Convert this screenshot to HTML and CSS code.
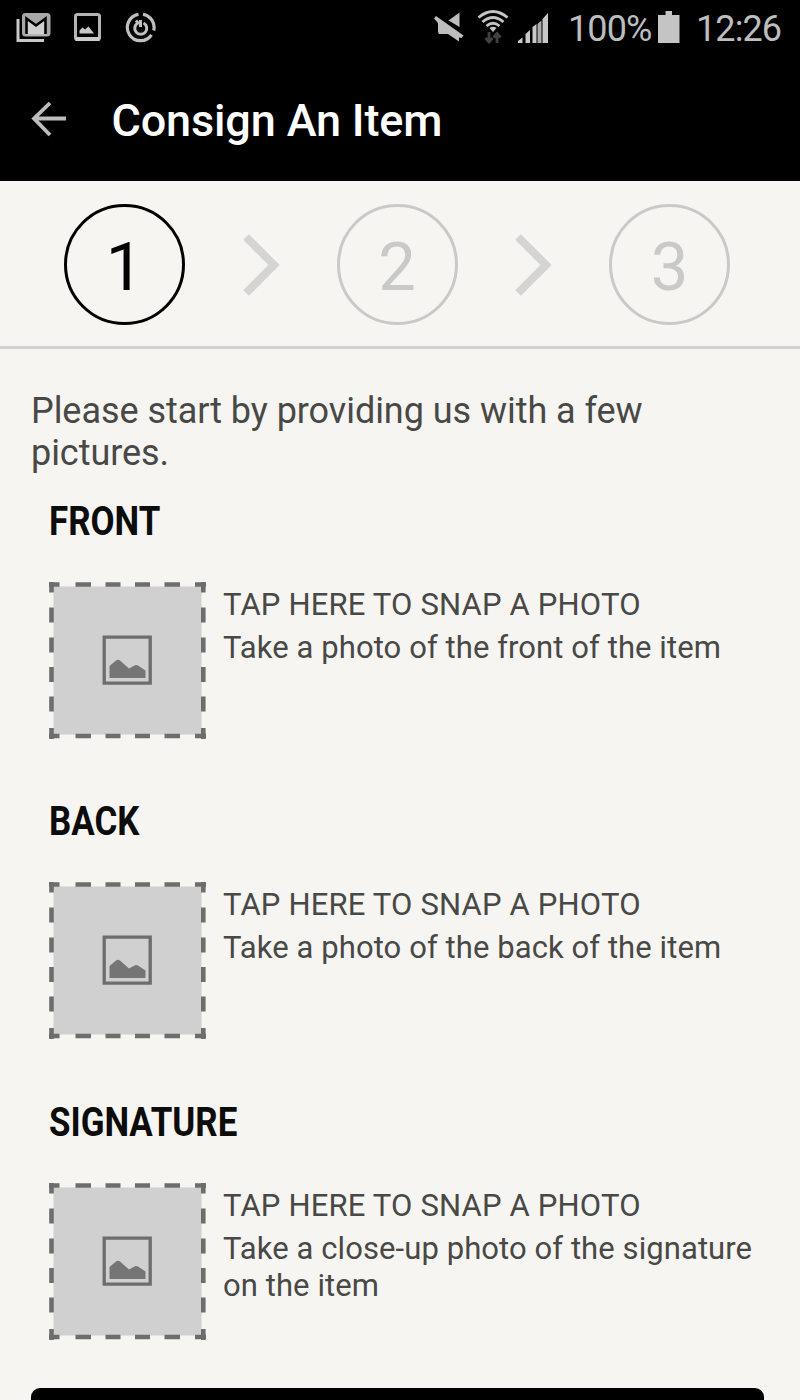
FILE: index.html
```html
<!DOCTYPE html>
<html lang="en">
<head>
<meta charset="utf-8">
<title>Consign An Item</title>
<link rel="stylesheet" href="styles.css">
</head>
<body>
<svg class="defs" width="0" height="0" aria-hidden="true">
  <symbol id="photo" viewBox="0 0 157 157">
    <path fill="#d0d0d0" d="M4.5 4.5h148v148H4.5z"/>
    <g fill="none" stroke="#6d6d6d" stroke-width="4.6">
      <path d="M0 2.5h10.5M26.5 2.5h15.5M56.5 2.5h15M86 2.5h15M115.500 2.500h15.500M146 2.500h11M0 154h10.500M26.500 154h15.500M56.500 154h15M86 154h15M115.500 154h15.500M146 154h11"/>
      <path d="M2.500 0v10.500M2.500 25.500v15M2.500 55.500v15M2.500 85v15M2.500 114.500v15M2.500 146v11M154.300 0v10.500M154.300 25.500v15M154.300 55.500v15M154.300 85v15M154.300 114.500v15M154.300 146v11"/>
      <path stroke-width="3.300" d="M55.200 55.200h46v46h-46z"/>
    </g>
    <path fill="#757575" d="M60.500 96V84L67 78.500Q69 77 71 78.500L80 86.500 85.500 83.500Q87 82.500 89 83.500L96.500 88.500V96z"/>
  </symbol>
</svg>
<header class="header">
  <div class="status">
    <div class="notices">
      <svg width="36" height="32" viewBox="0 0 36 32"><path d="M2 7V28.500H28" fill="none" stroke="#c8c8c8" stroke-width="3"/><rect x="6" y="1" width="28.500" height="23.500" rx="3.500" fill="#a8a8a8"/><path d="M10.500 22V6.500L20 13.500l9.500-7V22" fill="#d0d0d0" stroke="#000" stroke-width="2.600"/><path d="M9 22h22v2H9z" fill="#b4b4b4"/></svg>
      <svg width="28" height="30" viewBox="0 0 28 30"><rect x="1.500" y="2.500" width="24" height="25" rx="2" fill="none" stroke="#b4b4b4" stroke-width="3"/><path d="M1.500 25h24v4h-24z" fill="#ccc"/><path d="M5.500 21.500v-3l3-3 2.500 2 3.500-3 5.500 7z" fill="#c8c8c8"/></svg>
      <svg width="32" height="32" viewBox="0 0 32 32" fill="none" stroke="#c0c0c0" stroke-width="3.200"><path d="M18 2.300A13.200 13.200 0 0 1 28.700 18.500M26.500 22.800A13.200 13.200 0 1 1 13.500 2.400"/><path d="M11 8.500l2 2.500A6 6 0 1 0 18.500 11M15.500 8v7" stroke-width="3"/></svg>
    </div>
    <svg class="mute" width="30" height="30" viewBox="0 0 30 30"><path d="M2 4L29.500 23.500L27.500 26 25 25.500V29.500L14 22H5L4 20V11L0 6.500z" fill="#bebebe"/><path d="M14.500 8.500L25.500 0.500V15z" fill="#bebebe"/></svg>
    <svg class="wifi" width="32" height="34" viewBox="0 0 32 34" fill="none" stroke="#c4c4c4" stroke-width="2.800"><path d="M1.500 7.500Q16-4.500 30.500 7.500M5.500 12Q16 3 26.500 12M9.500 16Q16 10.500 22.500 16"/><path d="M12.500 18Q16 15.500 19.500 18L16 22z" fill="#c4c4c4" stroke="none"/><path d="M12 22v9M8.500 28l3.500 4 3.500-4M20 33V24M16.500 27.500l3.500-4 3.500 4" stroke="#404040" stroke-width="2.800"/></svg>
    <svg class="signal" width="32" height="32" viewBox="0 0 32 32" fill="#c8c8c8"><path d="M1 31v-2l4.500-3.500V31zM8.500 31V22l4.500-4v13z"/><path d="M15.500 31V15l4-3v19z"/><path fill="#aaa" d="M20.500 31V12l4-3.500V31z"/><path d="M25.500 31V7L31 1v30z"/></svg>
    <span class="status-text percent">100%</span>
    <svg class="battery" width="22" height="32" viewBox="0 0 22 32"><path d="M7.500 0h6.500v4H21.500v28H0V4h7.500z" fill="#c4c4c4"/></svg>
    <span class="status-text">12:26</span>
  </div>
  <div class="titlebar">
    <svg width="36" height="36" viewBox="0 0 36 36" fill="none" stroke="#bdbdbd" stroke-width="3.800"><path d="M35 17.500H4M19 2L3 17.500 19 34"/></svg>
    <h1 class="title">Consign An Item</h1>
  </div>
</header>
<nav class="steps">
  <div class="step current">1</div>
  <svg width="38" height="64" viewBox="0 0 38 64"><path d="M4 4l28 28L4 60" fill="none" stroke="#d4d4d2" stroke-width="8"/></svg>
  <div class="step">2</div>
  <svg width="38" height="64" viewBox="0 0 38 64"><path d="M4 4l28 28L4 60" fill="none" stroke="#d4d4d2" stroke-width="8"/></svg>
  <div class="step">3</div>
</nav>
<main class="content">
  <p class="intro">Please start by providing us with a few pictures.</p>
  <section class="item">
    <h2 class="heading">FRONT</h2>
    <div class="row"><svg class="photo"><use href="#photo"/></svg>
      <div class="text"><p class="tap">TAP HERE TO SNAP A PHOTO</p><p class="hint">Take a photo of the front of the item</p></div></div>
  </section>
  <section class="item">
    <h2 class="heading">BACK</h2>
    <div class="row"><svg class="photo"><use href="#photo"/></svg>
      <div class="text"><p class="tap">TAP HERE TO SNAP A PHOTO</p><p class="hint">Take a photo of the back of the item</p></div></div>
  </section>
  <section class="item">
    <h2 class="heading">SIGNATURE</h2>
    <div class="row"><svg class="photo"><use href="#photo"/></svg>
      <div class="text"><p class="tap">TAP HERE TO SNAP A PHOTO</p><p class="hint">Take a close-up photo of the signature<br>on the item</p></div></div>
  </section>
  <div class="button"></div>
</main>
</body>
</html>
```
FILE: styles.css
```css
* { box-sizing: border-box; }
body { margin: 0; height: 1400px; overflow: hidden; background: #f6f5f1; font-family: Roboto, sans-serif; color: #484846; }
h1, h2, p { margin: 0; }
svg { display: block; flex: none; }
.defs { position: absolute; }
.header { height: 181px; background: #000; }
.status { display: flex; height: 60px; padding: 12px 0 0 16px; align-items: flex-start; }
.notices { display: flex; gap: 22px; width: 418px; }
.notices svg:nth-child(3) { margin-left: 1px; }
.wifi { margin: -2px 0 0 13px; }
.signal { margin-left: 8px; }
.battery { margin-top: -1px; }
.status-text { font-size: 36px; line-height: 35px; letter-spacing: -0.9px; color: #bdbdbd; white-space: nowrap; }
.percent { width: 90px; margin-left: 19px; }
.battery + .status-text { margin-left: 16px; }
.titlebar { display: flex; padding: 41px 0 0 31px; }
.title { margin-left: 44.5px; margin-top: -6px; font-size: 45px; line-height: 52px; font-weight: 500; letter-spacing: -0.15px; color: #fff; white-space: nowrap; }
.steps { display: flex; align-items: center; height: 168px; padding: 2px 70px 0 64px; justify-content: space-between; border-bottom: 3px solid #d0d0ce; }
.step { width: 121px; height: 121px; border: 3.5px solid #c9c9c8; border-radius: 50%; font-size: 67px; line-height: 121px; text-align: center; color: #c9c9c8; }
.step.current { border-color: #000; color: #000; }
.content { padding: 41px 0 0 31px; }
.intro { width: 700px; font-size: 36px; line-height: 42px; letter-spacing: -0.05px; }
.item { height: 300.300px; padding: 24px 0 0 18px; }
.heading { font-size: 40px; line-height: 48px; font-weight: 700; color: #0c0c0c; transform: scaleX(.872); transform-origin: 0 0; white-space: nowrap; }
.row { display: flex; gap: 17px; padding-top: 36px; }
.photo { width: 157px; height: 157px; }
.tap { margin-top: 2px; font-size: 31px; letter-spacing: 0.17px; line-height: 42px; white-space: nowrap; }
.hint { margin-top: 3px; font-size: 31px; letter-spacing: 0.08px; line-height: 37px; white-space: nowrap; }
.button { width: 733px; height: 60px; margin-top: 13px; border-radius: 9px; background: #000; }
```
